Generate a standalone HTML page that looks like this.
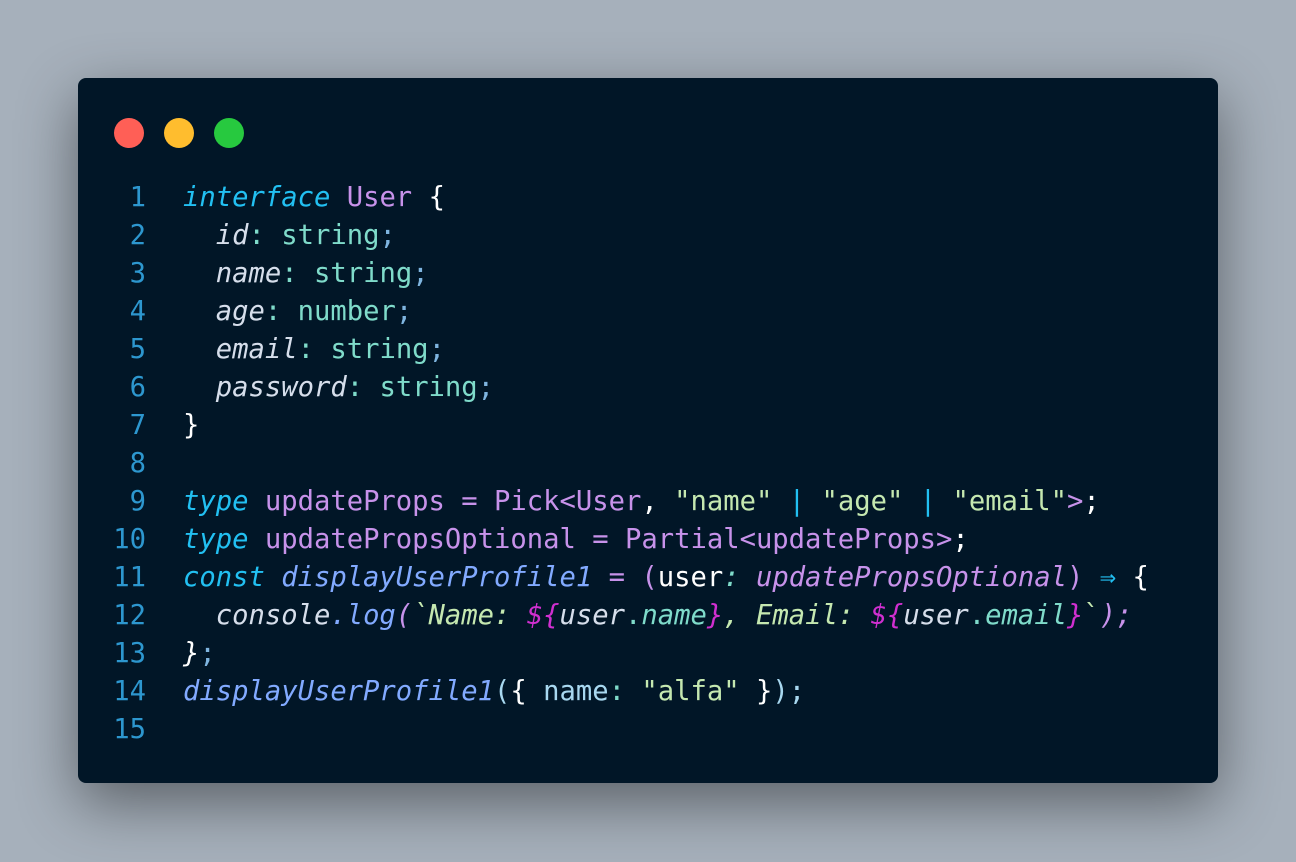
<!DOCTYPE html>
<html><head><meta charset="utf-8"><style>
body{margin:0;width:1296px;height:862px;background:#a6b0bb;overflow:hidden}
.win{position:absolute;left:78px;top:78px;width:1140px;height:705px;background:#011627;border-radius:8px;box-shadow:0 20px 60px rgba(0,0,0,.45)}
.dot{position:absolute;top:40px;width:30px;height:30px;border-radius:50%}
.code{position:absolute;left:0;top:101px;font-family:"DejaVu Sans Mono","Liberation Mono",monospace;font-size:27.2px;line-height:38px;white-space:pre;color:#d6deeb}
.ln{display:inline-block;width:68px;text-align:right;color:#2d97cf;margin-right:37px}
.k{color:#22c0f2;font-style:italic}.t{color:#c792ea}.p{color:#d6deeb;font-style:italic}.c{color:#7fdbca}
.s{color:#c5e8b0}.f{color:#82aaff;font-style:italic}.w{color:#fff}.m{color:#c792ea}.i{font-style:italic}
.pk{color:#d02fd0;font-style:italic}
</style></head><body>
<div class="win">
<div class="dot" style="left:36px;background:#ff5f56"></div>
<div class="dot" style="left:86px;background:#ffbd2e"></div>
<div class="dot" style="left:136px;background:#27c93f"></div>
<div class="code"><span class="ln">1</span><span class="k">interface</span> <span class="t">User</span> <span class="w">{</span>
<span class="ln">2</span>  <span class="p">id</span><span class="c">:</span> <span class="c">string</span><span style="color:#7fb5e0">;</span>
<span class="ln">3</span>  <span class="p">name</span><span class="c">:</span> <span class="c">string</span><span style="color:#7fb5e0">;</span>
<span class="ln">4</span>  <span class="p">age</span><span class="c">:</span> <span class="c">number</span><span style="color:#7fb5e0">;</span>
<span class="ln">5</span>  <span class="p">email</span><span class="c">:</span> <span class="c">string</span><span style="color:#7fb5e0">;</span>
<span class="ln">6</span>  <span class="p">password</span><span class="c">:</span> <span class="c">string</span><span style="color:#7fb5e0">;</span>
<span class="ln">7</span><span class="w">}</span>
<span class="ln">8</span>
<span class="ln">9</span><span class="k">type</span> <span class="t">updateProps</span> <span class="m">=</span> <span class="t">Pick</span><span class="m">&lt;</span><span class="t">User</span><span class="w">,</span> <span class="s">"name"</span> <span class="k" style="font-style:normal">|</span> <span class="s">"age"</span> <span class="k" style="font-style:normal">|</span> <span class="s">"email"</span><span class="m">&gt;</span><span class="w">;</span>
<span class="ln">10</span><span class="k">type</span> <span class="t">updatePropsOptional</span> <span class="m">=</span> <span class="t">Partial</span><span class="m">&lt;</span><span class="t">updateProps</span><span class="m">&gt;</span><span class="w">;</span>
<span class="ln">11</span><span class="k">const</span> <span class="f">displayUserProfile1</span> <span class="m">=</span> <span class="m">(</span><span class="w">user</span><span class="c i">:</span> <span class="t i">updatePropsOptional</span><span class="m">)</span> <span class="k" style="font-style:normal">⇒</span> <span class="w">{</span>
<span class="ln">12</span>  <span class="p">console</span><span class="f">.log</span><span class="m i">(</span><span class="s i">`Name: </span><span class="pk">${</span><span class="p">user</span><span class="c">.</span><span class="c i">name</span><span class="pk">}</span><span class="s i">, Email: </span><span class="pk">${</span><span class="p">user</span><span class="c">.</span><span class="c i">email</span><span class="pk">}</span><span class="s">`</span><span class="m i">);</span>
<span class="ln">13</span><span class="w i">}</span><span style="color:#7fb5e0">;</span>
<span class="ln">14</span><span class="f">displayUserProfile1</span><span style="color:#a8d8f0">(</span><span class="w">{</span> <span style="color:#a8d8f0">name</span><span class="c">:</span> <span class="s">"alfa"</span> <span class="w">}</span><span style="color:#a8d8f0">);</span>
<span class="ln">15</span></div>
</div>
</body></html>
